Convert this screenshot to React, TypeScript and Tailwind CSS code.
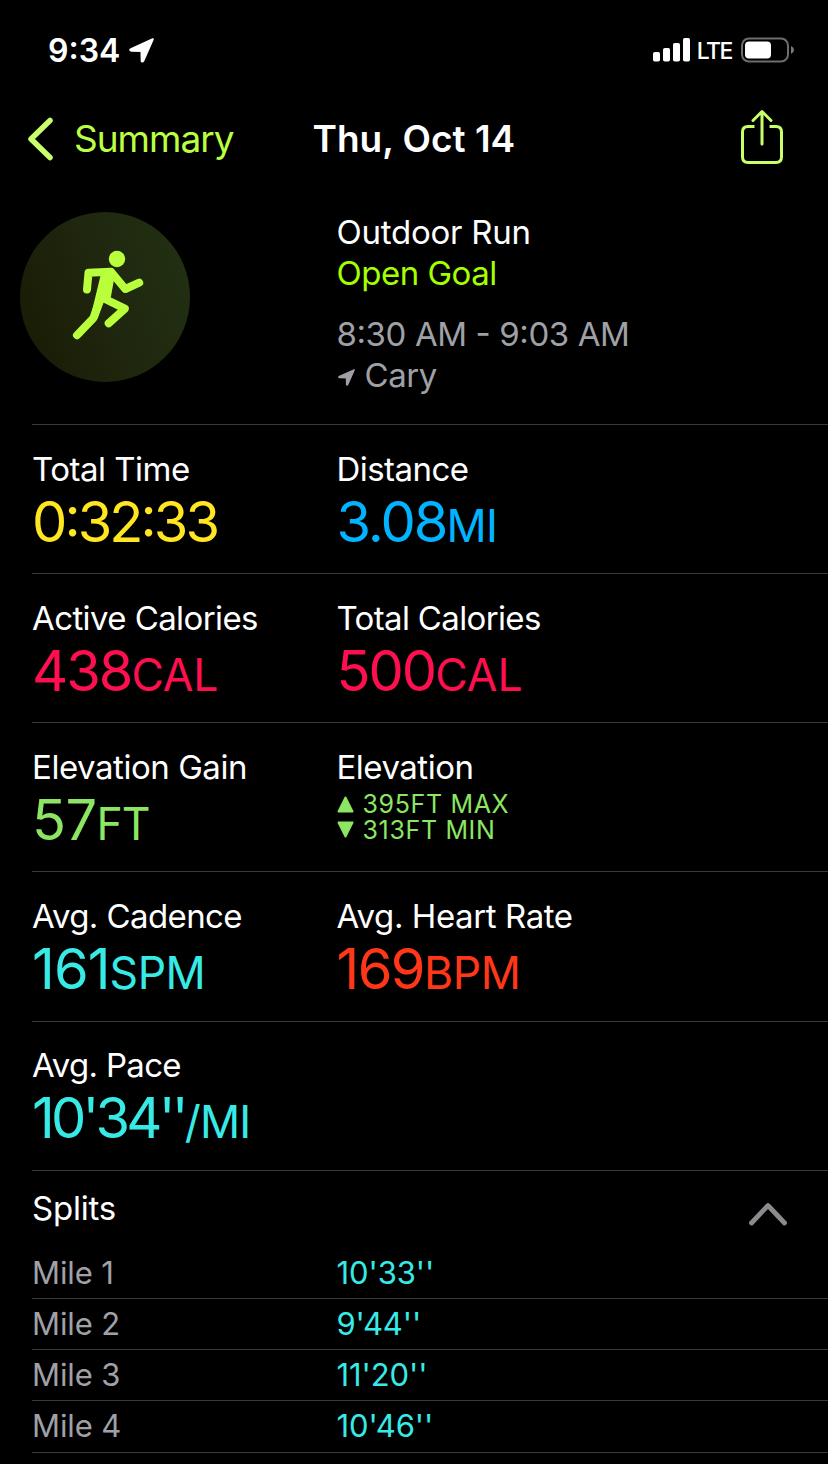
import React from "react";

type Metric = {
  label: string;
  value: string;
  unit?: string;
  color: string;
  labelTracking: string;
  valueTracking: string;
  unitTracking?: string;
};

const metricRows: Metric[][] = [
  [
    { label: "Total Time", value: "0:32:33", color: "text-[#ffe620]", labelTracking: "tracking-[-0.5px]", valueTracking: "tracking-[-2.9px]" },
    { label: "Distance", value: "3.08", unit: "MI", color: "text-[#00b4ff]", labelTracking: "tracking-[-0.55px]", valueTracking: "tracking-[-2px]", unitTracking: "tracking-[-0.6px]" },
  ],
  [
    { label: "Active Calories", value: "438", unit: "CAL", color: "text-[#ff0f50]", labelTracking: "tracking-[-0.6px]", valueTracking: "tracking-[-2px]", unitTracking: "tracking-[-0.3px]" },
    { label: "Total Calories", value: "500", unit: "CAL", color: "text-[#ff0f50]", labelTracking: "tracking-[-0.65px]", valueTracking: "tracking-[-2px]", unitTracking: "tracking-[0px]" },
  ],
  [
    { label: "Elevation Gain", value: "57", unit: "FT", color: "text-[#8ce663]", labelTracking: "tracking-[-0.45px]", valueTracking: "tracking-[-0.6px]", unitTracking: "tracking-[-1px]" },
  ],
  [
    { label: "Avg. Cadence", value: "161", unit: "SPM", color: "text-[#38eae6]", labelTracking: "tracking-[-0.6px]", valueTracking: "tracking-[-0.9px]", unitTracking: "tracking-[-0.5px]" },
    { label: "Avg. Heart Rate", value: "169", unit: "BPM", color: "text-[#ff3718]", labelTracking: "tracking-[-0.42px]", valueTracking: "tracking-[-1.6px]", unitTracking: "tracking-[-0.4px]" },
  ],
  [
    { label: "Avg. Pace", value: "10'34''", unit: "/MI", color: "text-[#38eae6]", labelTracking: "tracking-[-0.7px]", valueTracking: "tracking-[-3.8px]", unitTracking: "tracking-[-0.8px]" },
  ],
];

const splits = [
  { mile: "Mile 1", pace: "10'33''" },
  { mile: "Mile 2", pace: "9'44''" },
  { mile: "Mile 3", pace: "11'20''" },
  { mile: "Mile 4", pace: "10'46''" },
];

function LocationArrow({ className }: { className: string }) {
  return (
    <svg viewBox="0 0 24 24" className={className} fill="currentColor" stroke="currentColor" strokeWidth="2" strokeLinejoin="round">
      <path d="M22.800 1.200 L1.400 10.900 Q1 12 2.200 12.200 L12 12.400 L12.200 22 Q12.800 23.200 13.700 22 Z" />
    </svg>
  );
}

function MetricCell({ metric }: { metric: Metric }) {
  return (
    <div className="pt-[22.700px]">
      <p className={`text-[33px] leading-[42px] text-white ${metric.labelTracking}`}>{metric.label}</p>
      <p className={`pt-px text-[56px] leading-[62px] [font-feature-settings:'case'] ${metric.color}`}>
        <span className={metric.valueTracking}>{metric.value}</span>
        {metric.unit && <span className={`text-[44.500px] ${metric.unitTracking}`}>{metric.unit}</span>}
      </p>
    </div>
  );
}

function ElevationCell() {
  return (
    <div className="pt-[22.700px]">
      <p className="text-[33px] leading-[42px] tracking-[-0.5px] text-white">Elevation</p>
      <div className="flex flex-col pt-[3px] text-[25px] leading-[26px] tracking-[0.65px] text-[#8ce663]">
        <div className="flex items-center gap-[9px]">
          <svg className="mt-px" width="17" height="17" viewBox="0 0 17 17" fill="currentColor" stroke="currentColor" strokeWidth="2" strokeLinejoin="round">
            <path d="M8.500 1.500 L15.500 15.500 H1.500 Z" />
          </svg>
          <span>395FT MAX</span>
        </div>
        <div className="flex items-center gap-[9px]">
          <svg width="17" height="17" viewBox="0 0 17 17" fill="currentColor" stroke="currentColor" strokeWidth="2" strokeLinejoin="round">
            <path d="M8.500 15.500 L15.500 1.500 H1.500 Z" />
          </svg>
          <span>313FT MIN</span>
        </div>
      </div>
    </div>
  );
}

export default function App() {
  return (
    <main className="h-[1464px] w-[828px] overflow-hidden bg-black font-['Inter',sans-serif] text-white">
      {/* Status Bar */}
      <div className="flex h-[100px] items-center justify-between pl-[48px] pr-[34px]">
        <div className="flex items-center gap-[9px]">
          <span className="pt-[2px] text-[32px] font-semibold leading-none">9:34</span>
          <LocationArrow className="h-[25px] w-[25px]" />
        </div>
        <div className="flex items-center">
          <svg width="38" height="24" viewBox="0 0 38 24" fill="white">
            <rect x="0" y="14" width="7" height="9.5" rx="1.8" />
            <rect x="10" y="10" width="7" height="13.5" rx="1.8" />
            <rect x="20" y="5" width="7" height="18.5" rx="1.8" />
            <rect x="30" y="0" width="7" height="23.5" rx="1.8" />
          </svg>
          <span className="ml-[6px] pt-[2px] text-[23px] font-medium leading-none tracking-[-1.5px]">LTE</span>
          <svg className="ml-[9px]" width="53" height="26" viewBox="0 0 53 26">
            <rect x="1" y="1.5" width="46" height="23" rx="7" fill="none" stroke="#6d6d6d" strokeWidth="2" />
            <rect x="4" y="4.5" width="26" height="17" rx="4" fill="white" />
            <path d="M50 9 Q53 10.3 53 13 Q53 15.700 50 17 Z" fill="#7b7b7b" />
          </svg>
        </div>
      </div>

      {/* Nav Bar */}
      <div className="grid h-[78px] grid-cols-[286px_1fr_88px] items-center">
        <div className="flex items-center pl-[27px] text-[#baff42]">
          <svg width="27" height="44" viewBox="0 0 27 44" fill="none" stroke="#c8ff6a" strokeWidth="5.500" strokeLinecap="round" strokeLinejoin="round">
            <path d="M23 3.500 L4 22 L23 40.500" />
          </svg>
          <span className="ml-[20px] pb-[2px] text-[37px] leading-none tracking-[-1px]">Summary</span>
        </div>
        <h1 className="pb-[2px] pl-[26.500px] text-[37px] font-semibold leading-none">Thu, Oct 14</h1>
        <svg className="mb-[5px]" width="44" height="56" viewBox="0 0 44 56" fill="none" stroke="#c8ff6a" strokeWidth="3" strokeLinecap="round" strokeLinejoin="round">
          <path d="M14.500 17.500 H8 Q2.500 17.500 2.500 23 V48 Q2.500 53.500 8 53.500 H36 Q41.500 53.500 41.500 48 V23 Q41.500 17.500 36 17.500 H29.500" strokeLinecap="butt" />
          <path d="M22 35 V3 M13 11.500 L22 2.500 L31 11.500" />
        </svg>
      </div>

      {/* Workout Info */}
      <div className="grid h-[246px] grid-cols-[336.500px_1fr]">
        <div className="pl-[20px] pt-[34px]">
          <div className="h-[170px] w-[170px] rounded-full bg-[linear-gradient(70deg,#1a1b04_5%,#1f270e_50%,#223013_95%)]">
            <svg width="170" height="170" viewBox="0 0 170 170" fill="none" stroke="#b9ff3b" strokeWidth="8" strokeLinecap="round" strokeLinejoin="round">
              <circle cx="97" cy="47" r="8.200" fill="#b9ff3b" stroke="none" />
              <path d="M67 77.500 L68.500 60.700 L91 59.700 L105.300 77 L119.200 70.700" />
              <path d="M83 86 L104.800 96.700 L88.700 111.200" />
              <path d="M79 90 L73.300 106.300 L57 123.200" />
              <path d="M84 62 L92 62 L88 84 L81 89 L75 105 L73.300 106.300 Z" fill="#b9ff3b" strokeWidth="6" />
            </svg>
          </div>
        </div>
        <div className="pt-[34px] text-[33px] leading-[41px]">
          <p className="tracking-[-0.25px]">Outdoor Run</p>
          <p className="tracking-[-0.5px] text-[#a4ff00]">Open Goal</p>
          <p className="mt-[20px] tracking-[-0.4px] text-[#a0a0a7] [font-feature-settings:'case']">8:30 AM - 9:03 AM</p>
          <p className="flex items-center tracking-[-0.4px] text-[#a0a0a7]">
            <LocationArrow className="ml-px mr-[10px] mt-[3px] h-[17px] w-[17px]" />
            Cary
          </p>
        </div>
      </div>

      {/* Metrics */}
      {metricRows.map((row) => (
        <div key={row[0].label} className="ml-8 grid h-[149.150px] grid-cols-[304.500px_1fr] border-t border-[#3a3a3c]">
          {row.map((metric) => (
            <MetricCell key={metric.label} metric={metric} />
          ))}
          {row[0].label === "Elevation Gain" && <ElevationCell />}
        </div>
      ))}

      {/* Splits */}
      <div className="ml-8 border-t border-[#3a3a3c]">
        <div className="flex h-[77px] items-center justify-between pr-[40px]">
          <h2 className="pb-[2px] text-[33px] leading-none tracking-[-0.2px]">Splits</h2>
          <svg className="mt-[10px]" width="40" height="26" viewBox="0 0 40 26" fill="none" stroke="#8a8a8f" strokeWidth="4.800" strokeLinecap="round" strokeLinejoin="round">
            <path d="M3.500 22 L20 4.500 L36.500 22" />
          </svg>
        </div>
        {splits.map((split) => (
          <div key={split.mile} className="grid h-[51.200px] grid-cols-[304.500px_1fr] items-center border-b border-[#3a3a3c] pb-[1.500px] text-[31px] leading-none tracking-[-0.1px] last:h-[52px] last:pb-[2.300px]">
            <span className="text-[#a0a0a7]">{split.mile}</span>
            <span className="text-[#38eae6]">{split.pace}</span>
          </div>
        ))}
      </div>
    </main>
  );
}
